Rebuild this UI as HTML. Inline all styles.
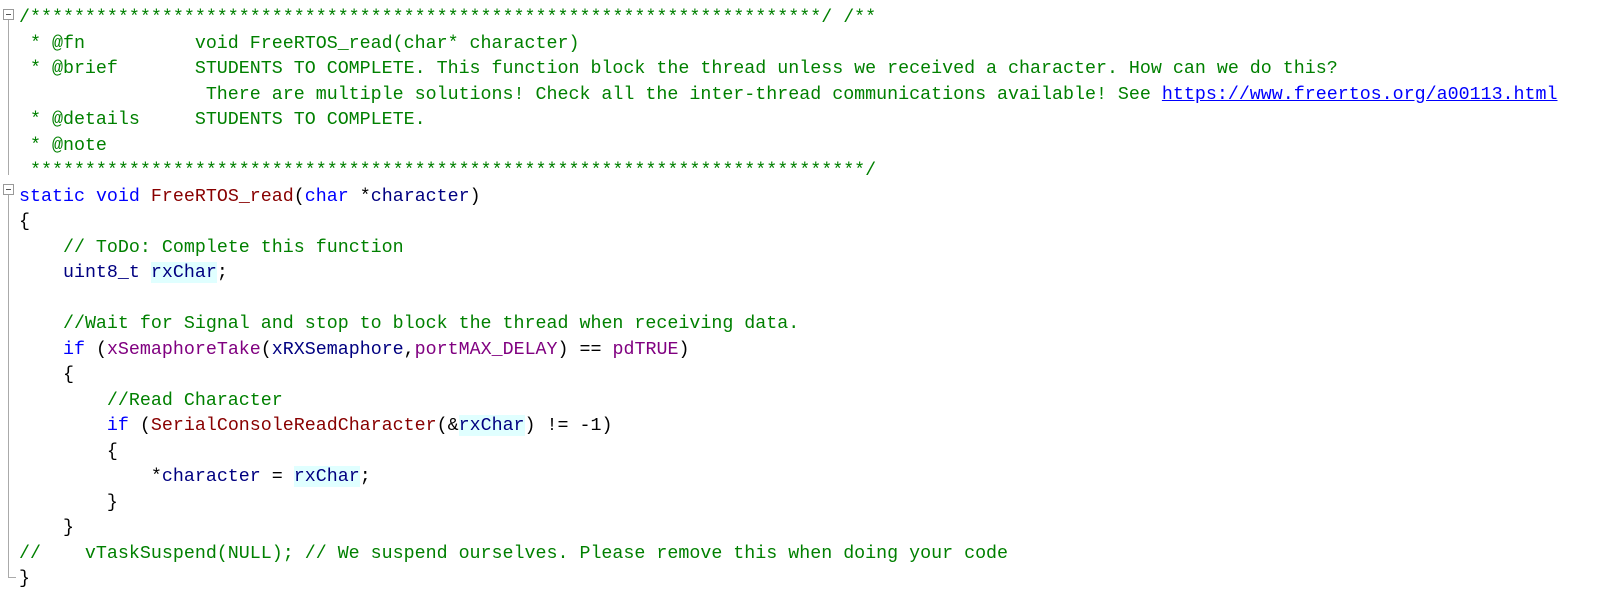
<!DOCTYPE html>
<html><head><meta charset="utf-8"><style>
html,body{margin:0;padding:0;background:#fff;width:1601px;height:601px;overflow:hidden;position:relative}
pre{position:absolute;left:19px;top:5px;margin:0;font-family:"Liberation Mono",monospace;font-size:18.32px;line-height:25.5px;color:#000;white-space:pre}
.c{color:#008000}.k{color:#0000ff}.f{color:#880000}.m{color:#800080}.v{color:#000080}
.h{background:#e0ffff;color:#000080}
a{color:#0000ff;text-decoration:underline}
.box{position:absolute;left:3px;width:9px;height:9px;border:1px solid #999;background:#fff}
.box:after{content:"";position:absolute;left:2px;top:4px;width:5px;height:1px;background:#555}
.vl{position:absolute;left:8px;width:1px;background:#aaa}
.hl{position:absolute;left:8px;height:1px;width:8px;background:#aaa}
</style></head><body>
<div class="box" style="top:9px"></div>
<div class="vl" style="top:20px;height:155px"></div>
<div class="box" style="top:184px"></div>
<div class="vl" style="top:195px;height:383px"></div>
<div class="hl" style="top:577px"></div>
<pre><span class="c">/************************************************************************/ /**
 * @fn          void FreeRTOS_read(char* character)
 * @brief       STUDENTS TO COMPLETE. This function block the thread unless we received a character. How can we do this?
                 There are multiple solutions! Check all the inter-thread communications available! See <a>https://www.freertos.org/a00113.html</a>
 * @details     STUDENTS TO COMPLETE.
 * @note
 ****************************************************************************/</span>
<span class="k">static</span> <span class="k">void</span> <span class="f">FreeRTOS_read</span>(<span class="k">char</span> *<span class="v">character</span>)
{
    <span class="c">// ToDo: Complete this function</span>
    <span class="v">uint8_t</span> <span class="h">rxChar</span>;

    <span class="c">//Wait for Signal and stop to block the thread when receiving data.</span>
    <span class="k">if</span> (<span class="m">xSemaphoreTake</span>(<span class="v">xRXSemaphore</span>,<span class="m">portMAX_DELAY</span>) == <span class="m">pdTRUE</span>)
    {
        <span class="c">//Read Character</span>
        <span class="k">if</span> (<span class="f">SerialConsoleReadCharacter</span>(&amp;<span class="h">rxChar</span>) != -1)
        {
            *<span class="v">character</span> = <span class="h">rxChar</span>;
        }
    }
<span class="c">//    vTaskSuspend(NULL); // We suspend ourselves. Please remove this when doing your code</span>
}</pre>
</body></html>
